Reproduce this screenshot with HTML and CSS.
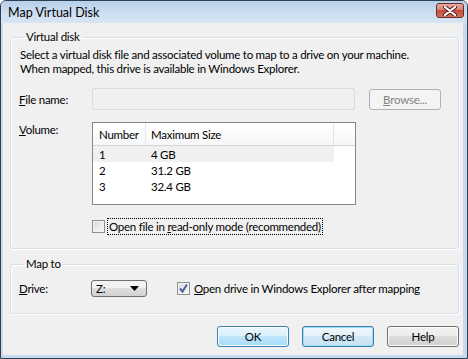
FILE: index.html
```html
<!DOCTYPE html>
<html lang="en">
<head>
    <meta charset="UTF-8">
    <title>Map Virtual Disk</title>
    <link rel="stylesheet" href="styles.css">
</head>
<body>
    <div class="window">
        <div class="titlebar">
            <span class="title">Map Virtual Disk</span>
            <div class="close">
                <svg width="14" height="10" viewBox="0 0 14 10">
                    <path d="M2 1 L12 9 M12 1 L2 9" stroke="#5a2019" stroke-width="4" stroke-linecap="round"/>
                    <path d="M2 1 L12 9 M12 1 L2 9" stroke="#ffffff" stroke-width="2.2" stroke-linecap="round"/>
                </svg>
            </div>
        </div>

        <div class="frame">
            <div class="content">
                <fieldset class="group group-disk">
                    <legend>Virtual disk</legend>
                    <p class="intro">Select a virtual disk file and associated volume to map to a drive on your machine.<br>When mapped, this drive is available in Windows Explorer.</p>

                    <div class="row row-file">
                        <span class="field-label"><u>F</u>ile name:</span>
                        <div class="textbox"></div>
                        <div class="btn btn-disabled"><u>B</u>rowse...</div>
                    </div>

                    <div class="row row-volume">
                        <span class="field-label"><u>V</u>olume:</span>
                        <div class="listview">
                            <div class="lv-head">
                                <span class="col col-num">Number</span>
                                <span class="col col-size">Maximum Size</span>
                            </div>
                            <div class="lv-row lv-selected">
                                <span class="col col-num">1</span>
                                <span class="col col-size">4 GB</span>
                            </div>
                            <div class="lv-row">
                                <span class="col col-num">2</span>
                                <span class="col col-size">31.2 GB</span>
                            </div>
                            <div class="lv-row">
                                <span class="col col-num">3</span>
                                <span class="col col-size">32.4 GB</span>
                            </div>
                        </div>
                    </div>

                    <div class="row row-check">
                        <span class="checkbox"></span>
                        <span class="check-text focused">Open file in <u>r</u>ead-only mode (recommended)</span>
                    </div>
                </fieldset>

                <fieldset class="group group-map">
                    <legend>Map to</legend>
                    <div class="row row-drive">
                        <span class="field-label"><u>D</u>rive:</span>
                        <div class="combo">
                            <span>Z:</span>
                            <svg width="9" height="5" viewBox="0 0 9 5"><path d="M0 0 H9 L4.5 5 Z" fill="#000"/></svg>
                        </div>
                        <span class="checkbox checked">
                            <svg width="11" height="11" viewBox="0 0 11 11"><path d="M2 5.5 L4.5 8.5 L9 1.5" fill="none" stroke="#4b5fa0" stroke-width="2"/></svg>
                        </span>
                        <span class="check-text"><u>O</u>pen drive in Windows Explorer after mapping</span>
                    </div>
                </fieldset>

                <div class="actions">
                    <div class="btn btn-default">OK</div>
                    <div class="btn btn-focus">Cancel</div>
                    <div class="btn">Help</div>
                </div>
            </div>
        </div>
    </div>
</body>
</html>
```

FILE: styles.css
```css
* {
    margin: 0;
    padding: 0;
    box-sizing: border-box;
}

body {
    font-family: Lato, 'Liberation Sans', sans-serif;
    font-size: 11.5px;
    letter-spacing: -0.25px;
    color: #000;
    background: #fff;
    white-space: nowrap;
}

.window {
    width: 468px;
    height: 359px;
    border: 1px solid #2e3f52;
    border-radius: 6px 6px 0 0;
    background: #c6d9ee;
    display: flex;
    flex-direction: column;
    overflow: hidden;
}

.titlebar {
    height: 22px;
    flex: none;
    display: flex;
    align-items: center;
    justify-content: space-between;
    padding: 0 3px 0 7px;
    background: linear-gradient(#b7cfe9, #cfdff1 60%, #d6e4f3);
}

.title {
    font-size: 12.5px;
    letter-spacing: 0;
    color: #000;
    margin-top: 1px;
}

.close {
    width: 28px;
    height: 15px;
    margin-top: -3px;
    border: 1px solid #6b2e27;
    border-radius: 3px;
    background: linear-gradient(#e7aca3, #d87e72 45%, #c44a3b 50%, #d2705f);
    display: flex;
    align-items: center;
    justify-content: center;
}

.frame {
    flex: 1;
    padding: 0 4px 3px 2px;
    display: flex;
}

.content {
    flex: 1;
    background: #f0f0f0;
    padding: 6px 4px 0 7px;
    display: flex;
    flex-direction: column;
}

.group {
    border: 1px solid #d5dfe5;
    border-radius: 3px;
    padding: 0 12px 0 8px;
    box-shadow: inset 1px 1px 0 #fff, 1px 1px 0 #fff;
}

.group legend {
    margin-left: 5px;
    padding: 0 2px;
    line-height: 16px;
}

.group-disk {
    height: 220px;
}

.group-map {
    margin-top: 7px;
    height: 58px;
}

.intro {
    line-height: 14px;
    margin: 3px 0 0 1px;
}

.row {
    display: flex;
    align-items: center;
}

.field-label {
    width: 73px;
    flex: none;
}

.row-file {
    margin-top: 12px;
}

.textbox {
    width: 263px;
    height: 22px;
    border: 1px solid #d9dcdf;
    border-radius: 2px;
    background: #f0f0f0;
}

.row-file .btn {
    margin-left: 14px;
}

.row-volume {
    margin-top: 12px;
    align-items: flex-start;
}

.row-volume .field-label {
    margin-top: 1px;
}

.listview {
    width: 264px;
    height: 83px;
    border: 1px solid #828790;
    background: #fff;
}

.lv-head {
    height: 23px;
    display: flex;
    align-items: center;
    border-bottom: 1px solid #d5d5d5;
    background: linear-gradient(#fff, #f6f7f8);
}

.lv-head .col {
    height: 100%;
    display: flex;
    align-items: center;
    border-right: 1px solid #e3e5e7;
}

.col-num {
    width: 53px;
    padding-left: 6px;
}

.col-size {
    width: 188px;
    padding-left: 5px;
}

.lv-row {
    height: 16px;
    display: flex;
    align-items: center;
    width: 241px;
}

.lv-selected {
    background: #f0f0f0;
}

.row-check {
    margin-top: 14px;
    padding-left: 73px;
}

.checkbox {
    width: 13px;
    height: 13px;
    flex: none;
    border: 1px solid #8e8f8f;
    background: linear-gradient(135deg, #d9d9d9, #fafafa);
    box-shadow: inset 0 0 0 1px #f4f4f4;
    display: flex;
    align-items: center;
    justify-content: center;
}

.check-text {
    margin-left: 3px;
    padding: 0 1px;
    line-height: 15px;
}

.focused {
    outline: 1px dotted #000;
}

.row-drive {
    margin-top: 8px;
}

.combo {
    width: 56px;
    height: 17px;
    margin-left: -1px;
    border: 1px solid #707070;
    border-radius: 3px;
    background: linear-gradient(#f2f2f2 50%, #dedede 50%, #d2d2d2);
    display: flex;
    align-items: center;
    justify-content: space-between;
    padding: 0 7px 0 4px;
}

.row-drive .checkbox {
    margin-left: 30px;
}

.actions {
    margin-top: 12px;
    display: flex;
    justify-content: flex-end;
    gap: 13px;
}

.btn {
    width: 72px;
    height: 21px;
    flex: none;
    border: 1px solid #707070;
    border-radius: 3px;
    background: linear-gradient(#f2f2f2, #ebebeb 50%, #dddddd 50%, #cfcfcf);
    box-shadow: inset 0 0 0 1px #fbfbfb;
    display: flex;
    align-items: center;
    justify-content: center;
}

.btn-default {
    border-color: #3c7fb1;
    background: linear-gradient(#eaf6fd, #d9f0fc 50%, #bee6fd 50%, #a7d9f5);
}

.btn-focus {
    border-color: #3c7fb1;
    background: linear-gradient(#eef7fc, #e3f1fa 50%, #d3e9f7 50%, #c6e2f4);
    box-shadow: inset 0 0 0 1px #9fd9f3;
}

.btn-disabled {
    border-color: #adb2b5;
    background: #f4f4f4;
    color: #838383;
    box-shadow: none;
}
```
